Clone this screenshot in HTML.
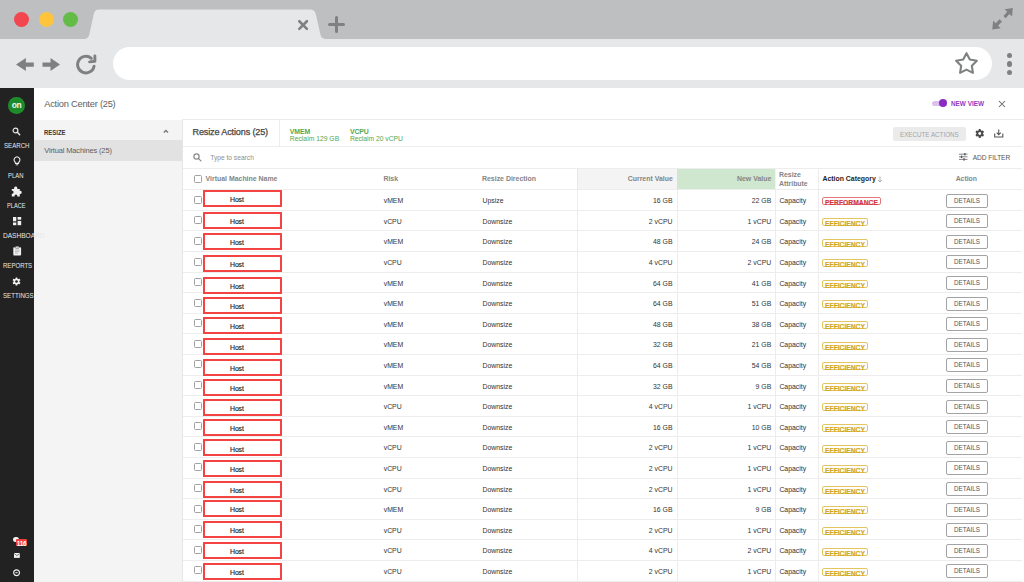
<!DOCTYPE html><html><head><meta charset="utf-8"><style>
*{box-sizing:border-box;margin:0;padding:0}
html,body{width:1024px;height:582px;overflow:hidden;background:#fff}
body{position:relative;font-family:"Liberation Sans",sans-serif;color:#333}
.a{position:absolute}
.t{position:absolute;white-space:nowrap;line-height:1}
#top{left:0;top:0;width:1024px;height:40px;background:#bebfc1}
#tool{left:0;top:39px;width:1024px;height:49px;background:#e6e7e9}
#addr{left:113px;top:47px;width:879px;height:32.8px;background:#fff;border-radius:17px}
.dot{position:absolute;width:15px;height:15px;border-radius:50%}
#side{left:0;top:88px;width:33.5px;height:494px;background:#222}
#hdr{left:33.5px;top:88px;width:990px;height:31.5px;background:#fff}
#lp{left:33.5px;top:119.5px;width:148px;height:463px;background:#f4f4f4}
#main{left:181.5px;top:119px;width:842px;height:463px;background:#fff;border-left:1px solid #e6e6e6;border-top:1px solid #ebebeb}
.sl{position:absolute;color:#e8e8e8;font-size:7.4px;line-height:1;white-space:nowrap}
.hl{position:absolute;height:1px;background:#ededed}
.vl{position:absolute;width:1px;background:#ededed}
.th{position:absolute;font-weight:bold;color:#858585;font-size:6.95px;line-height:1;white-space:nowrap}
.td{position:absolute;color:#333;font-size:6.9px;line-height:1;white-space:nowrap}
.rb{position:absolute;left:203.4px;width:78.5px;height:17px;border:2px solid #f44343;border-radius:0.5px}
.cb{position:absolute;left:194px;width:8px;height:8px;border:1px solid #a0a0a0;border-radius:1.5px;background:#fff}
.det{position:absolute;left:946.3px;width:41.3px;height:13.6px;border:1px solid #a3a3a3;border-radius:2px;color:#555;font-size:6.33px;line-height:11.8px;text-align:center}
.bp{position:absolute;left:822.1px;height:8px;border:1px solid #e5777b;border-radius:2px;color:#d3363b;font-weight:bold;font-size:6.75px;line-height:9.4px;padding:0 1.6px 0 2px;-webkit-text-stroke:0.15px #d3363b;white-space:nowrap}
.be{position:absolute;left:822.1px;height:8px;border:1px solid #e3c662;border-radius:2px;color:#d2a61c;font-weight:bold;font-size:6.7px;line-height:9.4px;padding:0 2px 0 2px;-webkit-text-stroke:0.15px #d2a61c;white-space:nowrap}
</style></head><body>
<div class="a" id="top"></div>
<div class="a" id="tool"></div>
<svg class="a" style="left:0;top:0" width="1024" height="40"><path d="M82.5,39.3 Q88.3,39.3 89.3,34.5 L93.8,14 Q94.8,9.6 99,9.6 L310,9.6 Q314.8,9.6 315.9,14.5 L320.4,34.5 Q321.6,39.3 327.5,39.3 L327.5,40 L82.5,40 Z" fill="#e6e7e9"/></svg>
<div class="dot" style="left:14px;top:12px;background:#f2474e"></div>
<div class="dot" style="left:38.5px;top:12px;background:#fec43c"></div>
<div class="dot" style="left:62.8px;top:12px;background:#63bc46"></div>
<svg class="a" style="left:297.1px;top:18.5px" width="12" height="12"><path d="M2.3,2.25 L9.9,9.85 M9.9,2.25 L2.3,9.85" stroke="#7f8081" stroke-width="2.6" stroke-linecap="round"/></svg>
<svg class="a" style="left:327px;top:15px" width="19" height="19"><path d="M9.5,2.5 V16.5 M2.5,9.5 H16.5" stroke="#7f8081" stroke-width="3" stroke-linecap="round"/></svg>
<svg class="a" style="left:986px;top:4px" width="32" height="30"><g fill="#7f8081"><path d="M26.8,4.1 L26,12.6 L23.43,10.03 L19.6,14.2 L17.5,11.9 L21.17,7.77 L18.6,5.2 Z"/><path d="M6.2,25.5 L7.2,16.8 L9.82,19.37 L13.4,15.2 L16,17.5 L12.08,21.63 L14.7,24.2 Z"/></g></svg>
<div class="a" id="addr"></div>
<svg class="a" style="left:14px;top:56px" width="50" height="17"><g fill="#7f8081"><path d="M2,8.6 L11.9,2 L11.9,6.4 L19.8,6.4 L19.8,10.8 L11.9,10.8 L11.9,15.1 Z"/><path d="M46,8.6 L36.5,2 L36.5,6.4 L28.5,6.4 L28.5,10.8 L36.5,10.8 L36.5,15.1 Z"/></g></svg>
<svg class="a" style="left:72px;top:50px" width="30" height="30"><path d="M22.07,16.14 A8.3,8.3 0 1 1 19.4,8.4" fill="none" stroke="#7f8081" stroke-width="2.9" stroke-linecap="round"/><path d="M17.6,11.9 L22.9,11.2 L22.9,6.0" fill="none" stroke="#7f8081" stroke-width="2.9" stroke-linecap="round" stroke-linejoin="round"/></svg>
<svg class="a" style="left:953px;top:51px" width="27" height="25"><path d="M13.50,2.15 L16.79,8.52 L23.87,9.68 L18.83,14.78 L19.91,21.87 L13.50,18.65 L7.09,21.87 L8.17,14.78 L3.13,9.68 L10.21,8.52 Z" fill="none" stroke="#7f8081" stroke-width="2.1" stroke-linejoin="round"/></svg>
<div class="a" style="left:1006.5px;top:52.5px;width:5.6px;height:5.6px;border-radius:50%;background:#7f8081"></div>
<div class="a" style="left:1006.5px;top:61.0px;width:5.6px;height:5.6px;border-radius:50%;background:#7f8081"></div>
<div class="a" style="left:1006.5px;top:69.5px;width:5.6px;height:5.6px;border-radius:50%;background:#7f8081"></div>
<div class="a" id="side"></div>
<div class="a" id="hdr"></div>
<div class="a" id="lp"></div>
<div class="a" id="main"></div>
<div class="a" style="left:8.2px;top:97.1px;width:16.8px;height:16.8px;border-radius:50%;background:radial-gradient(circle,#1c8a28 0,#1c8a28 55%,#2a9d36 100%)"></div>
<div class="t" style="left:8.2px;top:101.1px;width:16.8px;text-align:center;color:#f4f4f4;font-weight:bold;font-size:8.4px;letter-spacing:-0.4px">on</div>
<div class="sl" style="left:3.8px;top:142.10px;transform:scaleX(0.827);transform-origin:0 0">SEARCH</div>
<div class="sl" style="left:8.0px;top:171.50px;transform:scaleX(0.798);transform-origin:0 0">PLAN</div>
<div class="sl" style="left:6.6px;top:201.50px;transform:scaleX(0.764);transform-origin:0 0">PLACE</div>
<div class="sl" style="left:3.0px;top:232.20px;transform:scaleX(0.888);transform-origin:0 0">DASHBOARD</div>
<div class="sl" style="left:3.0px;top:261.60px;transform:scaleX(0.819);transform-origin:0 0">REPORTS</div>
<div class="sl" style="left:3.0px;top:292.30px;transform:scaleX(0.830);transform-origin:0 0">SETTINGS</div>
<svg class="a" style="left:12.4px;top:126.6px" width="9" height="9"><circle cx="3.5" cy="3.5" r="2.4" fill="none" stroke="#e4e4e4" stroke-width="1.2"/><path d="M5.3,5.3 L7.7,7.7" stroke="#e4e4e4" stroke-width="1.5" stroke-linecap="round"/></svg>
<svg class="a" style="left:13px;top:156.2px" width="8" height="10"><path d="M4,0.8 A3,3 0 0 1 5.9,6 L5.5,7.4 L2.5,7.4 L2.1,6 A3,3 0 0 1 4,0.8 Z" fill="none" stroke="#eee" stroke-width="1.1"/><path d="M2.8,8.8 H5.2" stroke="#eee" stroke-width="0.9"/></svg>
<svg class="a" style="left:11.3px;top:185.8px" width="11" height="11"><path d="M4.5,0.6 Q6.3,0.2 6.3,2.2 L6.3,2.9 L8.8,2.9 L8.8,4.9 Q10.9,4.6 10.7,6.5 Q10.5,8.3 8.8,8 L8.8,10.4 L6.3,10.4 Q6.6,8.6 5,8.6 Q3.4,8.7 3.5,10.4 L0.8,10.4 L0.8,7.7 Q2.6,7.8 2.6,6.2 Q2.6,4.6 0.8,4.8 L0.8,2.9 L3.1,2.9 Q2.6,1.0 4.5,0.6 Z" fill="#f0f0f0"/></svg>
<svg class="a" style="left:12.9px;top:217.2px" width="9" height="9"><g fill="#f0f0f0"><rect x="0" y="0" width="3.3" height="4.3"/><rect x="4.6" y="0" width="3.6" height="2.7"/><rect x="0" y="5.5" width="3.3" height="2.7"/><rect x="4.6" y="3.9" width="3.6" height="4.3"/></g></svg>
<svg class="a" style="left:12.8px;top:245.8px" width="9" height="10"><rect x="0.3" y="1.2" width="7.8" height="8.2" rx="0.9" fill="#f0f0f0"/><rect x="2.3" y="0.2" width="3.8" height="2" rx="0.5" fill="#f0f0f0" stroke="#222" stroke-width="0.5"/><path d="M2,4 H6.4 M2,5.6 H6.4 M2,7.2 H4.6" stroke="#999" stroke-width="0.6"/></svg>
<svg class="a" style="left:12.3px;top:276.8px" width="9" height="9"><g transform="translate(4.5,4.5)"><g fill="#f0f0f0"><circle r="2.9"/><rect x="-0.9" y="-4.1" width="1.8" height="8.2" rx="0.4"/><rect x="-0.9" y="-4.1" width="1.8" height="8.2" rx="0.4" transform="rotate(60)"/><rect x="-0.9" y="-4.1" width="1.8" height="8.2" rx="0.4" transform="rotate(120)"/></g><circle r="1.3" fill="#222"/></g></svg>
<div class="a" style="left:13.2px;top:536.9px;width:5.6px;height:5.6px;border-radius:50%;background:#f0f0f0"></div>
<div class="a" style="left:16px;top:539.2px;width:11px;height:7px;border-radius:1px;background:#f23b3b;color:#fff;font-size:6.4px;font-weight:bold;line-height:9.4px;text-align:center;overflow:hidden;letter-spacing:-0.2px">116</div>
<svg class="a" style="left:13.9px;top:553px" width="6" height="5"><rect x="0" y="0" width="5.8" height="4.9" fill="#f0f0f0"/><path d="M0.3,0.6 L2.9,2.6 L5.5,0.6" fill="none" stroke="#222" stroke-width="0.6"/></svg>
<svg class="a" style="left:12.9px;top:568.6px" width="8" height="8"><circle cx="3.6" cy="3.7" r="2.9" fill="none" stroke="#f0f0f0" stroke-width="1.2"/><path d="M2.4,3.7 H4.6" stroke="#f0f0f0" stroke-width="1.1"/></svg>
<div class="t" style="left:44.2px;top:99.6px;font-size:9.3px;color:#606060;letter-spacing:-0.23px">Action Center (25)</div>
<div class="a" style="left:931.7px;top:100.7px;width:12px;height:5.5px;border-radius:2.75px;background:#dcc0ee"></div>
<div class="a" style="left:938.8px;top:99.4px;width:8px;height:8px;border-radius:50%;background:#8a2bc2"></div>
<div class="t" style="left:950.9px;top:101.2px;font-size:6.43px;font-weight:bold;color:#8f3cc6">NEW VIEW</div>
<svg class="a" style="left:998px;top:99.7px" width="8" height="8"><path d="M1,1 L7,7 M7,1 L1,7" stroke="#666" stroke-width="1.05"/></svg>
<div class="t" style="left:44.2px;top:128.6px;font-size:7px;font-weight:bold;color:#383838;transform:scaleX(0.85);transform-origin:0 0">RESIZE</div>
<svg class="a" style="left:162.8px;top:129px" width="6" height="5"><path d="M0.8,3.6 L2.9,1.4 L5,3.6" fill="none" stroke="#7a7a7a" stroke-width="1.4"/></svg>
<div class="a" style="left:33.5px;top:140px;width:148px;height:20.7px;background:#e2e2e2"></div>
<div class="t" style="left:44.2px;top:146.9px;font-size:7.5px;color:#606060;letter-spacing:-0.15px">Virtual Machines (25)</div>
<div class="t" style="left:192.5px;top:128.2px;font-size:9.1px;color:#454545;letter-spacing:-0.15px;-webkit-text-stroke:0.25px #454545">Resize Actions (25)</div>
<div class="vl" style="left:279.2px;top:120px;height:26px"></div>
<div class="t" style="left:289.8px;top:129.3px;font-size:6.9px;font-weight:bold;color:#52a852;letter-spacing:-0.1px">VMEM</div>
<div class="t" style="left:289.8px;top:135.6px;font-size:6.79px;color:#52a852">Reclaim 129 GB</div>
<div class="t" style="left:349.9px;top:129.3px;font-size:6.9px;font-weight:bold;color:#52a852;letter-spacing:-0.1px">VCPU</div>
<div class="t" style="left:349.9px;top:135.6px;font-size:6.72px;color:#52a852">Reclaim 20 vCPU</div>
<div class="a" style="left:892.9px;top:126.8px;width:73px;height:14.5px;background:#ebebeb;border-radius:2px"></div>
<div class="t" style="left:899.8px;top:131px;font-size:7.2px;color:#a4a4a4;transform:scaleX(0.87);transform-origin:0 0">EXECUTE ACTIONS</div>
<svg class="a" style="left:975px;top:128.5px" width="10" height="10"><g transform="translate(4.75,4.5)"><g fill="#4a4a4a"><circle r="3.3"/><rect x="-1.05" y="-4.4" width="2.1" height="8.8" rx="0.4"/><rect x="-1.05" y="-4.4" width="2.1" height="8.8" rx="0.4" transform="rotate(60)"/><rect x="-1.05" y="-4.4" width="2.1" height="8.8" rx="0.4" transform="rotate(120)"/></g><circle r="1.4" fill="#fff"/></g></svg>
<svg class="a" style="left:994px;top:128.8px" width="10" height="9"><path d="M0.7,4.6 V8 H8.8 V4.6" fill="none" stroke="#555" stroke-width="1.1"/><path d="M4.75,0.4 V5.8 M2.7,3.7 L4.75,5.8 L6.8,3.7" fill="none" stroke="#555" stroke-width="1.05"/></svg>
<div class="hl" style="left:183px;top:145.8px;width:839px"></div>
<svg class="a" style="left:192.8px;top:152.8px" width="9" height="9"><circle cx="3.5" cy="3.5" r="2.6" fill="none" stroke="#8a8a8a" stroke-width="1.25"/><path d="M5.4,5.4 L7.9,7.9" stroke="#8a8a8a" stroke-width="1.3" stroke-linecap="round"/></svg>
<div class="t" style="left:210.2px;top:155.2px;font-size:6.67px;color:#8e8e8e">Type to search</div>
<svg class="a" style="left:958.8px;top:153.4px" width="9" height="8"><g stroke="#666" stroke-width="0.8"><path d="M0,1.2 H8.5 M0,3.8 H8.5 M0,6.4 H8.5"/></g><g fill="#555"><rect x="5.2" y="0" width="1.3" height="2.4"/><rect x="1.9" y="2.6" width="1.3" height="2.4"/><rect x="4.4" y="5.2" width="1.3" height="2.4"/></g></svg>
<div class="t" style="left:972.7px;top:154.9px;font-size:6.6px;color:#555;letter-spacing:-0.05px">ADD FILTER</div>
<div class="hl" style="left:183px;top:167.6px;width:839px"></div>
<div class="a" style="left:577.5px;top:168.6px;width:99.2px;height:20.6px;background:#f4f4f4"></div>
<div class="a" style="left:676.7px;top:168.6px;width:98.3px;height:20.6px;background:#cfe6cf"></div>
<div class="cb" style="left:193.6px;top:175.2px"></div>
<div class="th" style="left:205.5px;top:176.0px;font-size:6.95px">Virtual Machine Name</div>
<div class="th" style="left:383.4px;top:176.0px;font-size:6.95px">Risk</div>
<div class="th" style="left:482px;top:176.0px;font-size:6.95px">Resize Direction</div>
<div class="th" style="left:572px;width:100.8px;text-align:right;top:176.0px;font-size:6.95px">Current Value</div>
<div class="th" style="left:671px;width:100.3px;text-align:right;top:176.0px;font-size:6.95px">New Value</div>
<div class="th" style="left:779px;top:170.2px;font-size:6.9px;line-height:9px">Resize<br>Attribute</div>
<div class="th" style="left:822.5px;top:176.2px;font-size:6.9px;color:#1e1e1e">Action Category</div>
<svg class="a" style="left:876.6px;top:175.8px" width="6" height="7"><path d="M3,0.6 V6 M1,4 L3,6 L5,4" fill="none" stroke="#a0a0a0" stroke-width="0.8"/></svg>
<div class="th" style="left:926px;width:80.6px;text-align:center;top:176.0px;font-size:6.85px">Action</div>
<div class="vl" style="left:577.2px;top:168.6px;height:20.6px;background:#e8e8e8"></div>
<div class="vl" style="left:775px;top:168.6px;height:20.6px;background:#f3f3f3"></div>
<div class="vl" style="left:818.2px;top:168.6px;height:20.6px;background:#ededed"></div>
<div class="hl" style="left:183px;top:189.20px;width:839px"></div>
<div class="hl" style="left:183px;top:209.80px;width:839px"></div>
<div class="hl" style="left:183px;top:230.40px;width:839px"></div>
<div class="hl" style="left:183px;top:251.00px;width:839px"></div>
<div class="hl" style="left:183px;top:271.60px;width:839px"></div>
<div class="hl" style="left:183px;top:292.20px;width:839px"></div>
<div class="hl" style="left:183px;top:312.80px;width:839px"></div>
<div class="hl" style="left:183px;top:333.40px;width:839px"></div>
<div class="hl" style="left:183px;top:354.00px;width:839px"></div>
<div class="hl" style="left:183px;top:374.60px;width:839px"></div>
<div class="hl" style="left:183px;top:395.20px;width:839px"></div>
<div class="hl" style="left:183px;top:415.80px;width:839px"></div>
<div class="hl" style="left:183px;top:436.40px;width:839px"></div>
<div class="hl" style="left:183px;top:457.00px;width:839px"></div>
<div class="hl" style="left:183px;top:477.60px;width:839px"></div>
<div class="hl" style="left:183px;top:498.20px;width:839px"></div>
<div class="hl" style="left:183px;top:518.80px;width:839px"></div>
<div class="hl" style="left:183px;top:539.40px;width:839px"></div>
<div class="hl" style="left:183px;top:560.00px;width:839px"></div>
<div class="hl" style="left:183px;top:580.6px;width:839px"></div>
<div class="vl" style="left:577.2px;top:189.2px;height:393px"></div>
<div class="vl" style="left:676.5px;top:189.2px;height:393px"></div>
<div class="vl" style="left:775px;top:189.2px;height:393px"></div>
<div class="vl" style="left:818.2px;top:189.2px;height:393px"></div>
<div class="cb" style="top:195.80px"></div>
<div class="rb" style="top:189.90px"></div>
<div class="td" style="left:230.1px;top:197.00px;font-size:6.9px;color:#1a1a1a;letter-spacing:-0.15px;-webkit-text-stroke:0.15px #1a1a1a">Host</div>
<div class="td" style="left:383.7px;top:198.20px">vMEM</div>
<div class="td" style="left:482.5px;top:198.20px">Upsize</div>
<div class="td" style="left:572px;width:100.5px;text-align:right;top:198.20px">16 GB</div>
<div class="td" style="left:671px;width:100.3px;text-align:right;top:198.20px">22 GB</div>
<div class="td" style="left:779.4px;top:198.20px">Capacity</div>
<div class="bp" style="top:197.40px">PERFORMANCE</div>
<div class="det" style="top:193.50px;height:14px">DETAILS</div>
<div class="cb" style="top:216.38px"></div>
<div class="rb" style="top:211.90px"></div>
<div class="td" style="left:230.1px;top:219.00px;font-size:6.9px;color:#1a1a1a;letter-spacing:-0.15px;-webkit-text-stroke:0.15px #1a1a1a">Host</div>
<div class="td" style="left:383.7px;top:218.80px">vCPU</div>
<div class="td" style="left:482.5px;top:218.80px">Downsize</div>
<div class="td" style="left:572px;width:100.5px;text-align:right;top:218.80px">2 vCPU</div>
<div class="td" style="left:671px;width:100.3px;text-align:right;top:218.80px">1 vCPU</div>
<div class="td" style="left:779.4px;top:218.80px">Capacity</div>
<div class="be" style="top:218.00px">EFFICIENCY</div>
<div class="det" style="top:214.10px;height:14px">DETAILS</div>
<div class="cb" style="top:236.96px"></div>
<div class="rb" style="top:233.00px"></div>
<div class="td" style="left:230.1px;top:240.10px;font-size:6.9px;color:#1a1a1a;letter-spacing:-0.15px;-webkit-text-stroke:0.15px #1a1a1a">Host</div>
<div class="td" style="left:383.7px;top:239.40px">vMEM</div>
<div class="td" style="left:482.5px;top:239.40px">Downsize</div>
<div class="td" style="left:572px;width:100.5px;text-align:right;top:239.40px">48 GB</div>
<div class="td" style="left:671px;width:100.3px;text-align:right;top:239.40px">24 GB</div>
<div class="td" style="left:779.4px;top:239.40px">Capacity</div>
<div class="be" style="top:238.60px">EFFICIENCY</div>
<div class="det" style="top:234.70px;height:14px">DETAILS</div>
<div class="cb" style="top:257.54px"></div>
<div class="rb" style="top:254.70px"></div>
<div class="td" style="left:230.1px;top:261.80px;font-size:6.9px;color:#1a1a1a;letter-spacing:-0.15px;-webkit-text-stroke:0.15px #1a1a1a">Host</div>
<div class="td" style="left:383.7px;top:260.00px">vCPU</div>
<div class="td" style="left:482.5px;top:260.00px">Downsize</div>
<div class="td" style="left:572px;width:100.5px;text-align:right;top:260.00px">4 vCPU</div>
<div class="td" style="left:671px;width:100.3px;text-align:right;top:260.00px">2 vCPU</div>
<div class="td" style="left:779.4px;top:260.00px">Capacity</div>
<div class="be" style="top:259.20px">EFFICIENCY</div>
<div class="det" style="top:255.30px;height:14px">DETAILS</div>
<div class="cb" style="top:278.12px"></div>
<div class="rb" style="top:276.60px"></div>
<div class="td" style="left:230.1px;top:283.70px;font-size:6.9px;color:#1a1a1a;letter-spacing:-0.15px;-webkit-text-stroke:0.15px #1a1a1a">Host</div>
<div class="td" style="left:383.7px;top:280.60px">vMEM</div>
<div class="td" style="left:482.5px;top:280.60px">Downsize</div>
<div class="td" style="left:572px;width:100.5px;text-align:right;top:280.60px">64 GB</div>
<div class="td" style="left:671px;width:100.3px;text-align:right;top:280.60px">41 GB</div>
<div class="td" style="left:779.4px;top:280.60px">Capacity</div>
<div class="be" style="top:279.80px">EFFICIENCY</div>
<div class="det" style="top:275.90px;height:14px">DETAILS</div>
<div class="cb" style="top:298.70px"></div>
<div class="rb" style="top:296.70px"></div>
<div class="td" style="left:230.1px;top:303.80px;font-size:6.9px;color:#1a1a1a;letter-spacing:-0.15px;-webkit-text-stroke:0.15px #1a1a1a">Host</div>
<div class="td" style="left:383.7px;top:301.20px">vMEM</div>
<div class="td" style="left:482.5px;top:301.20px">Downsize</div>
<div class="td" style="left:572px;width:100.5px;text-align:right;top:301.20px">64 GB</div>
<div class="td" style="left:671px;width:100.3px;text-align:right;top:301.20px">51 GB</div>
<div class="td" style="left:779.4px;top:301.20px">Capacity</div>
<div class="be" style="top:300.40px">EFFICIENCY</div>
<div class="det" style="top:296.50px;height:14px">DETAILS</div>
<div class="cb" style="top:319.28px"></div>
<div class="rb" style="top:316.70px"></div>
<div class="td" style="left:230.1px;top:323.80px;font-size:6.9px;color:#1a1a1a;letter-spacing:-0.15px;-webkit-text-stroke:0.15px #1a1a1a">Host</div>
<div class="td" style="left:383.7px;top:321.80px">vMEM</div>
<div class="td" style="left:482.5px;top:321.80px">Downsize</div>
<div class="td" style="left:572px;width:100.5px;text-align:right;top:321.80px">48 GB</div>
<div class="td" style="left:671px;width:100.3px;text-align:right;top:321.80px">38 GB</div>
<div class="td" style="left:779.4px;top:321.80px">Capacity</div>
<div class="be" style="top:321.00px">EFFICIENCY</div>
<div class="det" style="top:317.10px;height:14px">DETAILS</div>
<div class="cb" style="top:339.86px"></div>
<div class="rb" style="top:338.30px"></div>
<div class="td" style="left:230.1px;top:345.40px;font-size:6.9px;color:#1a1a1a;letter-spacing:-0.15px;-webkit-text-stroke:0.15px #1a1a1a">Host</div>
<div class="td" style="left:383.7px;top:342.40px">vMEM</div>
<div class="td" style="left:482.5px;top:342.40px">Downsize</div>
<div class="td" style="left:572px;width:100.5px;text-align:right;top:342.40px">32 GB</div>
<div class="td" style="left:671px;width:100.3px;text-align:right;top:342.40px">21 GB</div>
<div class="td" style="left:779.4px;top:342.40px">Capacity</div>
<div class="be" style="top:341.60px">EFFICIENCY</div>
<div class="det" style="top:337.70px;height:14px">DETAILS</div>
<div class="cb" style="top:360.44px"></div>
<div class="rb" style="top:358.90px"></div>
<div class="td" style="left:230.1px;top:366.00px;font-size:6.9px;color:#1a1a1a;letter-spacing:-0.15px;-webkit-text-stroke:0.15px #1a1a1a">Host</div>
<div class="td" style="left:383.7px;top:363.00px">vMEM</div>
<div class="td" style="left:482.5px;top:363.00px">Downsize</div>
<div class="td" style="left:572px;width:100.5px;text-align:right;top:363.00px">64 GB</div>
<div class="td" style="left:671px;width:100.3px;text-align:right;top:363.00px">54 GB</div>
<div class="td" style="left:779.4px;top:363.00px">Capacity</div>
<div class="be" style="top:362.20px">EFFICIENCY</div>
<div class="det" style="top:358.30px;height:14px">DETAILS</div>
<div class="cb" style="top:381.02px"></div>
<div class="rb" style="top:378.80px"></div>
<div class="td" style="left:230.1px;top:385.90px;font-size:6.9px;color:#1a1a1a;letter-spacing:-0.15px;-webkit-text-stroke:0.15px #1a1a1a">Host</div>
<div class="td" style="left:383.7px;top:383.60px">vMEM</div>
<div class="td" style="left:482.5px;top:383.60px">Downsize</div>
<div class="td" style="left:572px;width:100.5px;text-align:right;top:383.60px">32 GB</div>
<div class="td" style="left:671px;width:100.3px;text-align:right;top:383.60px">9 GB</div>
<div class="td" style="left:779.4px;top:383.60px">Capacity</div>
<div class="be" style="top:382.80px">EFFICIENCY</div>
<div class="det" style="top:378.90px;height:14px">DETAILS</div>
<div class="cb" style="top:401.60px"></div>
<div class="rb" style="top:398.70px"></div>
<div class="td" style="left:230.1px;top:405.80px;font-size:6.9px;color:#1a1a1a;letter-spacing:-0.15px;-webkit-text-stroke:0.15px #1a1a1a">Host</div>
<div class="td" style="left:383.7px;top:404.20px">vCPU</div>
<div class="td" style="left:482.5px;top:404.20px">Downsize</div>
<div class="td" style="left:572px;width:100.5px;text-align:right;top:404.20px">4 vCPU</div>
<div class="td" style="left:671px;width:100.3px;text-align:right;top:404.20px">1 vCPU</div>
<div class="td" style="left:779.4px;top:404.20px">Capacity</div>
<div class="be" style="top:403.40px">EFFICIENCY</div>
<div class="det" style="top:399.50px;height:14px">DETAILS</div>
<div class="cb" style="top:422.18px"></div>
<div class="rb" style="top:418.80px"></div>
<div class="td" style="left:230.1px;top:425.90px;font-size:6.9px;color:#1a1a1a;letter-spacing:-0.15px;-webkit-text-stroke:0.15px #1a1a1a">Host</div>
<div class="td" style="left:383.7px;top:424.80px">vMEM</div>
<div class="td" style="left:482.5px;top:424.80px">Downsize</div>
<div class="td" style="left:572px;width:100.5px;text-align:right;top:424.80px">16 GB</div>
<div class="td" style="left:671px;width:100.3px;text-align:right;top:424.80px">10 GB</div>
<div class="td" style="left:779.4px;top:424.80px">Capacity</div>
<div class="be" style="top:424.00px">EFFICIENCY</div>
<div class="det" style="top:420.10px;height:14px">DETAILS</div>
<div class="cb" style="top:442.76px"></div>
<div class="rb" style="top:439.40px"></div>
<div class="td" style="left:230.1px;top:446.50px;font-size:6.9px;color:#1a1a1a;letter-spacing:-0.15px;-webkit-text-stroke:0.15px #1a1a1a">Host</div>
<div class="td" style="left:383.7px;top:445.40px">vCPU</div>
<div class="td" style="left:482.5px;top:445.40px">Downsize</div>
<div class="td" style="left:572px;width:100.5px;text-align:right;top:445.40px">2 vCPU</div>
<div class="td" style="left:671px;width:100.3px;text-align:right;top:445.40px">1 vCPU</div>
<div class="td" style="left:779.4px;top:445.40px">Capacity</div>
<div class="be" style="top:444.60px">EFFICIENCY</div>
<div class="det" style="top:440.70px;height:14px">DETAILS</div>
<div class="cb" style="top:463.34px"></div>
<div class="rb" style="top:459.70px"></div>
<div class="td" style="left:230.1px;top:466.80px;font-size:6.9px;color:#1a1a1a;letter-spacing:-0.15px;-webkit-text-stroke:0.15px #1a1a1a">Host</div>
<div class="td" style="left:383.7px;top:466.00px">vCPU</div>
<div class="td" style="left:482.5px;top:466.00px">Downsize</div>
<div class="td" style="left:572px;width:100.5px;text-align:right;top:466.00px">2 vCPU</div>
<div class="td" style="left:671px;width:100.3px;text-align:right;top:466.00px">1 vCPU</div>
<div class="td" style="left:779.4px;top:466.00px">Capacity</div>
<div class="be" style="top:465.20px">EFFICIENCY</div>
<div class="det" style="top:461.30px;height:14px">DETAILS</div>
<div class="cb" style="top:483.92px"></div>
<div class="rb" style="top:480.80px"></div>
<div class="td" style="left:230.1px;top:487.90px;font-size:6.9px;color:#1a1a1a;letter-spacing:-0.15px;-webkit-text-stroke:0.15px #1a1a1a">Host</div>
<div class="td" style="left:383.7px;top:486.60px">vCPU</div>
<div class="td" style="left:482.5px;top:486.60px">Downsize</div>
<div class="td" style="left:572px;width:100.5px;text-align:right;top:486.60px">2 vCPU</div>
<div class="td" style="left:671px;width:100.3px;text-align:right;top:486.60px">1 vCPU</div>
<div class="td" style="left:779.4px;top:486.60px">Capacity</div>
<div class="be" style="top:485.80px">EFFICIENCY</div>
<div class="det" style="top:481.90px;height:14px">DETAILS</div>
<div class="cb" style="top:504.50px"></div>
<div class="rb" style="top:499.60px"></div>
<div class="td" style="left:230.1px;top:506.70px;font-size:6.9px;color:#1a1a1a;letter-spacing:-0.15px;-webkit-text-stroke:0.15px #1a1a1a">Host</div>
<div class="td" style="left:383.7px;top:507.20px">vMEM</div>
<div class="td" style="left:482.5px;top:507.20px">Downsize</div>
<div class="td" style="left:572px;width:100.5px;text-align:right;top:507.20px">16 GB</div>
<div class="td" style="left:671px;width:100.3px;text-align:right;top:507.20px">9 GB</div>
<div class="td" style="left:779.4px;top:507.20px">Capacity</div>
<div class="be" style="top:506.40px">EFFICIENCY</div>
<div class="det" style="top:502.50px;height:14px">DETAILS</div>
<div class="cb" style="top:525.08px"></div>
<div class="rb" style="top:521.00px"></div>
<div class="td" style="left:230.1px;top:528.10px;font-size:6.9px;color:#1a1a1a;letter-spacing:-0.15px;-webkit-text-stroke:0.15px #1a1a1a">Host</div>
<div class="td" style="left:383.7px;top:527.80px">vCPU</div>
<div class="td" style="left:482.5px;top:527.80px">Downsize</div>
<div class="td" style="left:572px;width:100.5px;text-align:right;top:527.80px">2 vCPU</div>
<div class="td" style="left:671px;width:100.3px;text-align:right;top:527.80px">1 vCPU</div>
<div class="td" style="left:779.4px;top:527.80px">Capacity</div>
<div class="be" style="top:527.00px">EFFICIENCY</div>
<div class="det" style="top:523.10px;height:14px">DETAILS</div>
<div class="cb" style="top:545.66px"></div>
<div class="rb" style="top:541.90px"></div>
<div class="td" style="left:230.1px;top:549.00px;font-size:6.9px;color:#1a1a1a;letter-spacing:-0.15px;-webkit-text-stroke:0.15px #1a1a1a">Host</div>
<div class="td" style="left:383.7px;top:548.40px">vCPU</div>
<div class="td" style="left:482.5px;top:548.40px">Downsize</div>
<div class="td" style="left:572px;width:100.5px;text-align:right;top:548.40px">4 vCPU</div>
<div class="td" style="left:671px;width:100.3px;text-align:right;top:548.40px">2 vCPU</div>
<div class="td" style="left:779.4px;top:548.40px">Capacity</div>
<div class="be" style="top:547.60px">EFFICIENCY</div>
<div class="det" style="top:543.70px;height:14px">DETAILS</div>
<div class="cb" style="top:566.24px"></div>
<div class="rb" style="top:562.60px"></div>
<div class="td" style="left:230.1px;top:569.70px;font-size:6.9px;color:#1a1a1a;letter-spacing:-0.15px;-webkit-text-stroke:0.15px #1a1a1a">Host</div>
<div class="td" style="left:383.7px;top:569.00px">vCPU</div>
<div class="td" style="left:482.5px;top:569.00px">Downsize</div>
<div class="td" style="left:572px;width:100.5px;text-align:right;top:569.00px">2 vCPU</div>
<div class="td" style="left:671px;width:100.3px;text-align:right;top:569.00px">1 vCPU</div>
<div class="td" style="left:779.4px;top:569.00px">Capacity</div>
<div class="be" style="top:568.20px">EFFICIENCY</div>
<div class="det" style="top:564.30px;height:14px">DETAILS</div>
</body></html>
